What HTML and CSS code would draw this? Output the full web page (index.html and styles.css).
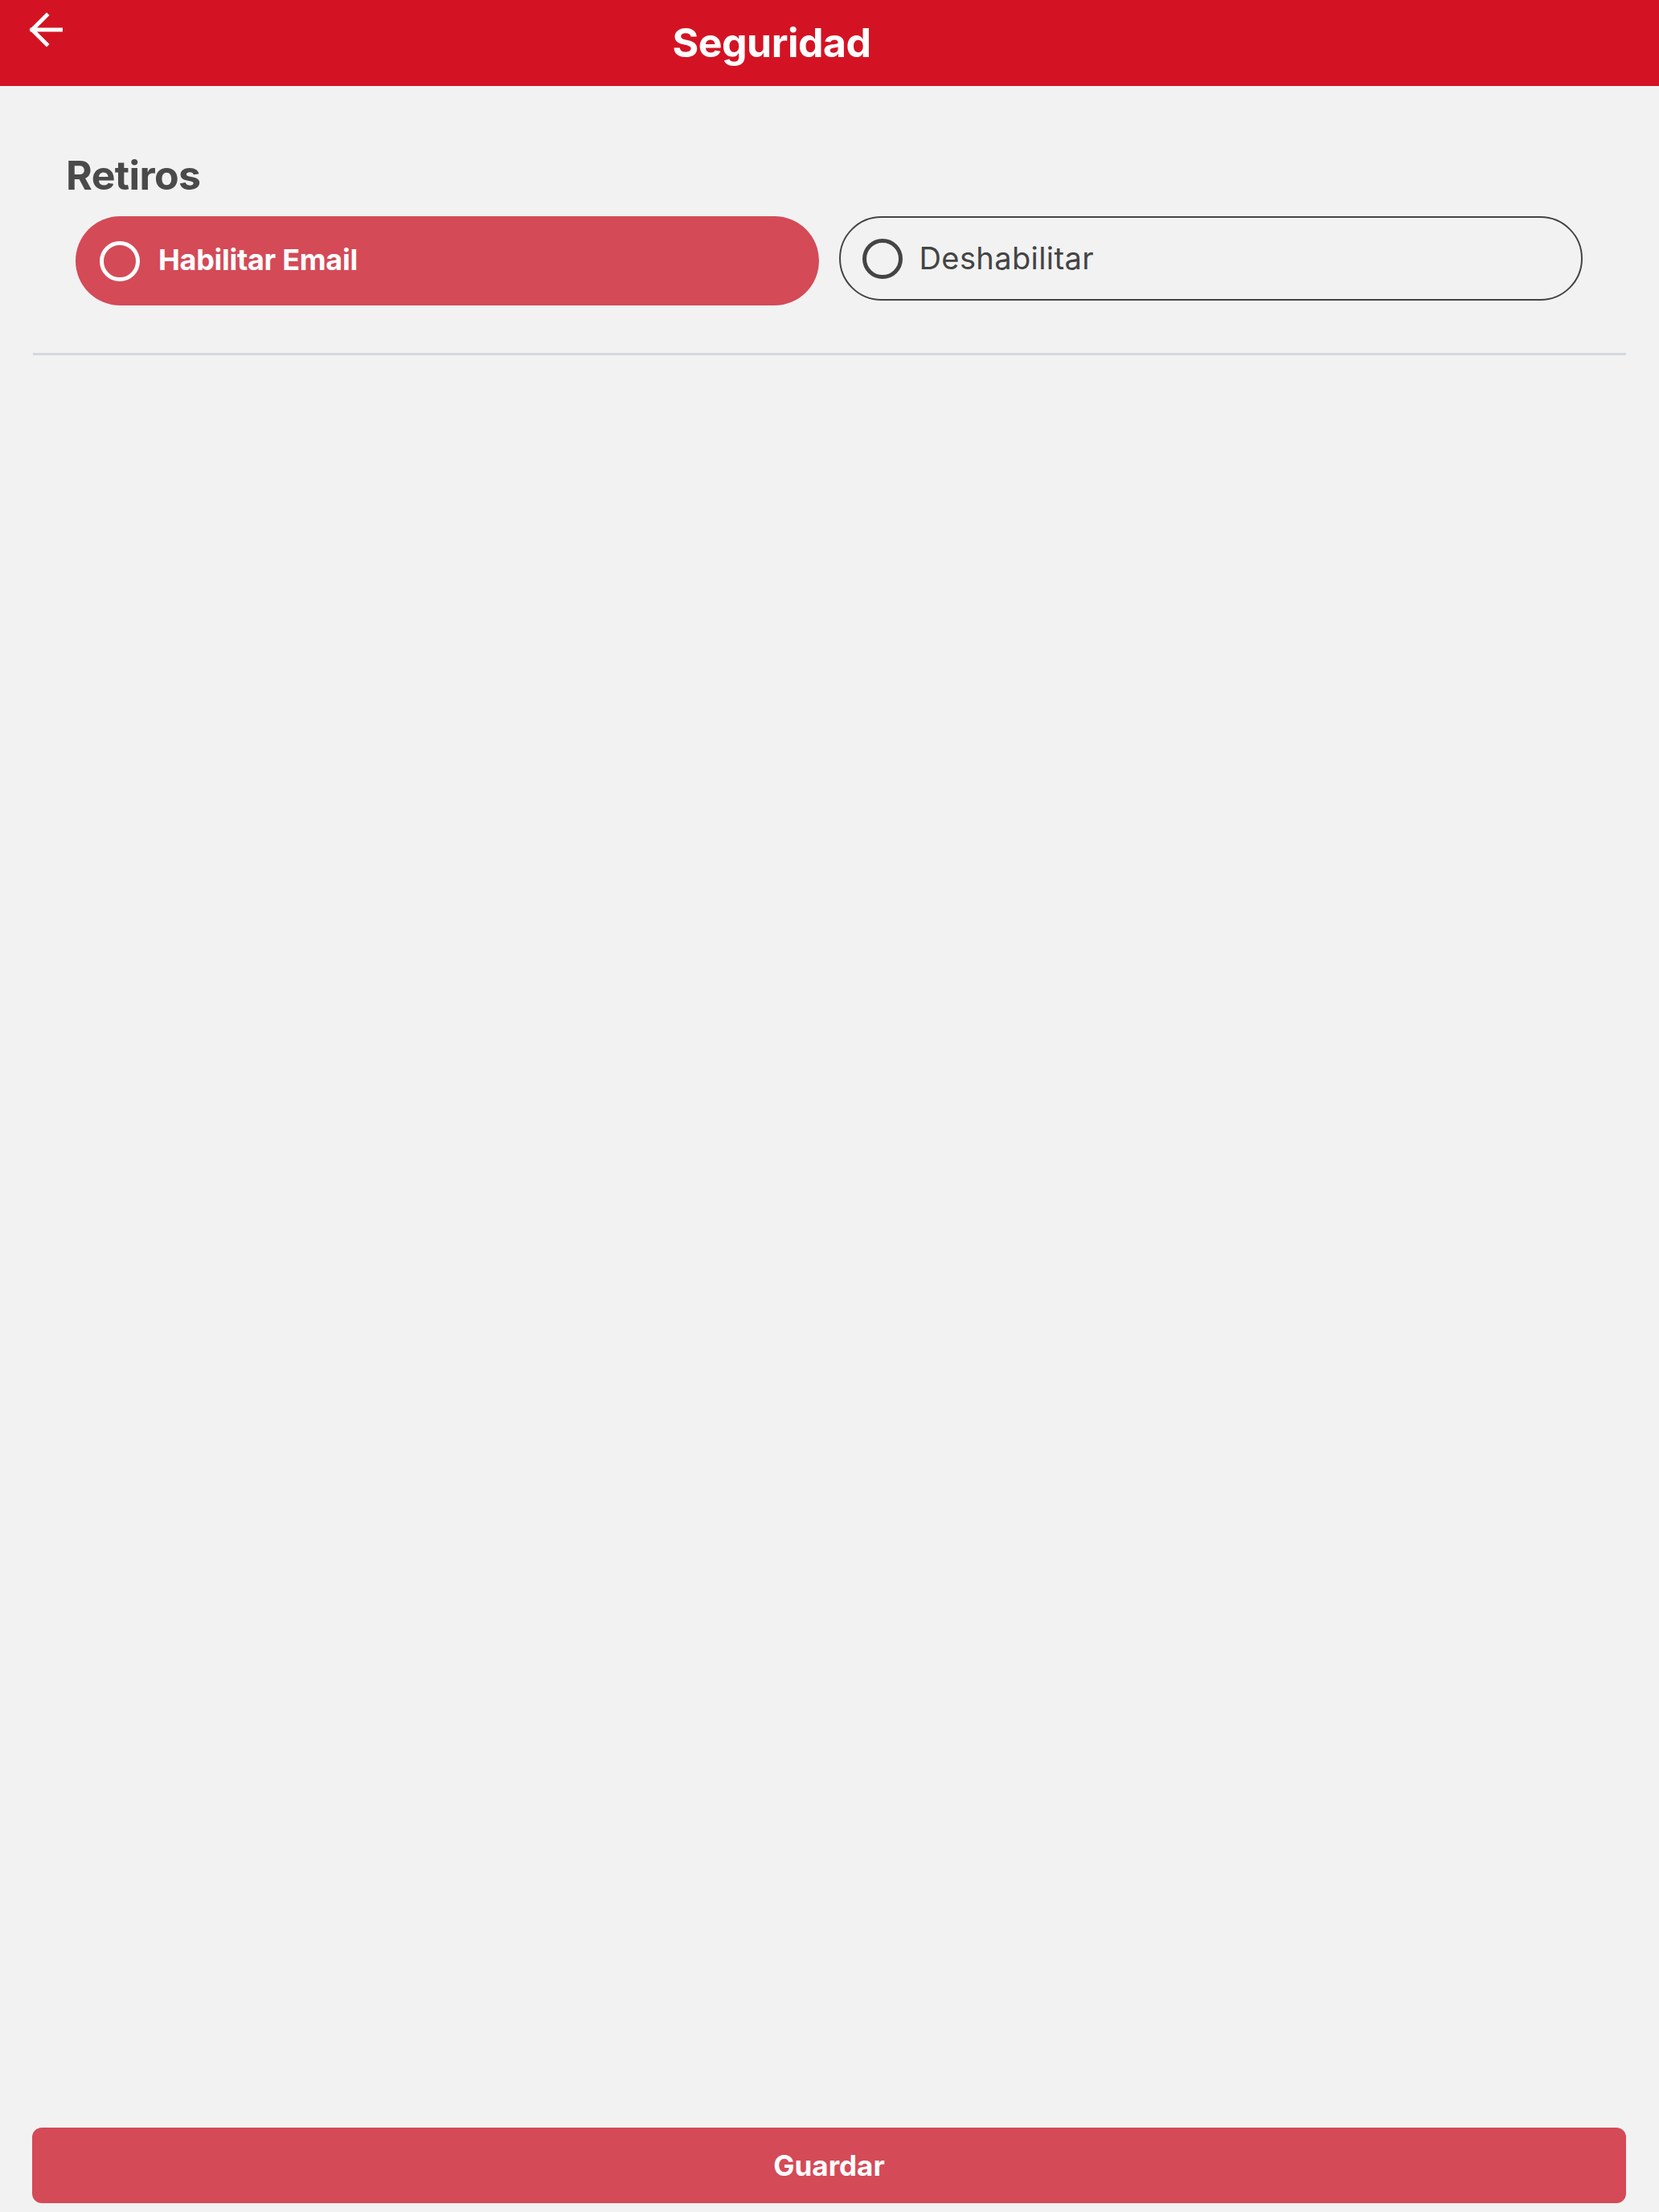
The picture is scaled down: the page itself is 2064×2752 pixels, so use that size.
FILE: index.html
```html
<!DOCTYPE html>
<html lang="es">
<head>
  <meta charset="UTF-8">
  <title>Seguridad</title>
  <link rel="stylesheet" href="styles.css">
</head>
<body>

  <!-- Header -->
  <header class="topbar">
    <div class="back-btn">
      <svg width="44" height="44" viewBox="0 0 44 44">
        <path d="M24 4 L6 22 L24 40 M6 22 H42" fill="none" stroke="#fff" stroke-width="5" stroke-linecap="square" stroke-linejoin="miter"/>
      </svg>
    </div>
    <h1 class="title">Seguridad</h1>
  </header>

  <!-- Content -->
  <main class="content">
    <h2 class="section-title">Retiros</h2>
    <div class="options">
      <div class="option selected">
        <span class="radio"></span>
        <span class="option-label">Habilitar Email</span>
      </div>
      <div class="option">
        <span class="radio"></span>
        <span class="option-label">Deshabilitar</span>
      </div>
    </div>
    <hr class="divider">
  </main>

  <div class="footer">
    <button class="save-btn">Guardar</button>
  </div>

</body>
</html>
```

FILE: styles.css
```css
* {
  box-sizing: border-box;
}
html, body {
  height: 100%;
}
body {
  margin: 0;
  font-family: Inter, 'Noto Sans', sans-serif;
  background: #f2f2f2;
  display: flex;
  flex-direction: column;
  min-height: 100vh;
}

/* Header */
.topbar {
  background: #d31323;
  height: 107px;
  display: flex;
  align-items: flex-start;
  flex-shrink: 0;
}
.back-btn {
  width: 100px;
  padding: 15px 0 0 34px;
}
.back-btn svg {
  display: block;
}
.title {
  flex: 1;
  margin: 0;
  padding: 23px 244px 0 0;
  text-align: center;
  color: #fff;
  font-size: 50px;
  font-weight: 700;
  letter-spacing: -0.5px;
}

/* Content */
.content {
  flex: 1;
  padding: 0 41px;
}
.section-title {
  margin: 0;
  padding: 81px 0 0 41px;
  font-size: 50px;
  font-weight: 700;
  color: #4a4a4a;
  letter-spacing: -0.6px;
}
.options {
  display: flex;
  align-items: flex-start;
  gap: 25px;
  margin-top: 21px;
  padding: 0 54px 0 53px;
}
.option {
  flex: 1;
  display: flex;
  align-items: center;
  height: 105px;
  border: 2px solid #444;
  border-radius: 60px;
  padding-left: 27px;
  color: #444;
}
.option.selected {
  height: 111px;
  background: #d44a57;
  border: none;
  padding-left: 30px;
  color: #fff;
}
.radio {
  width: 50px;
  height: 50px;
  border-radius: 50%;
  border: 5px solid #444;
  margin-right: 21px;
  flex-shrink: 0;
}
.option.selected .radio {
  border-color: #fff;
  margin-right: 23px;
}
.option-label {
  font-size: 38px;
  font-weight: 400;
  letter-spacing: 0.4px;
  padding-bottom: 2px;
}
.option.selected .option-label {
  font-size: 36px;
  font-weight: 700;
  letter-spacing: -0.3px;
  padding-bottom: 4px;
}
.divider {
  margin: 59px 0 0;
  border: none;
  height: 3px;
  background: #d5d8dc;
}

/* Footer */
.footer {
  padding: 0 41px 11px 40px;
}
.save-btn {
  display: block;
  width: 100%;
  height: 94px;
  border: none;
  border-radius: 12px;
  background: #d44a57;
  color: #fff;
  font-family: Inter, 'Noto Sans', sans-serif;
  font-size: 35px;
  font-weight: 700;
  cursor: pointer;
}
```
